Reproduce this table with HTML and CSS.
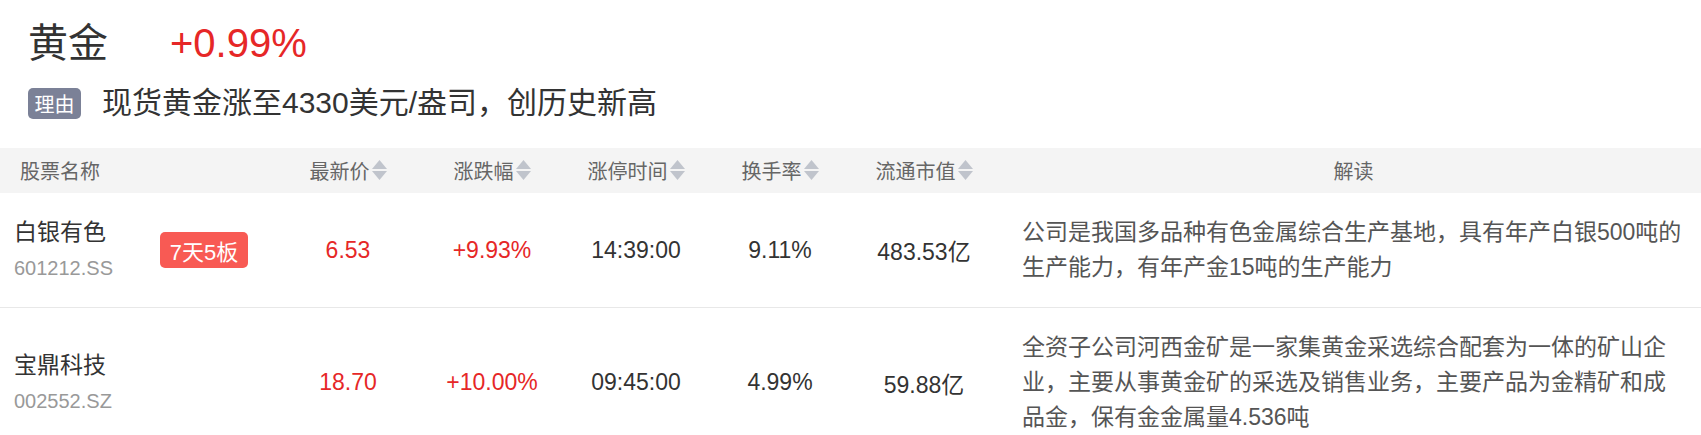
FILE: index.html
```html
<!DOCTYPE html>
<html lang="zh-CN">
<head>
<meta charset="utf-8">
<title>黄金</title>
<link rel="stylesheet" href="styles.css">
</head>
<body>
<div class="topic">
  <div class="topic-head">
    <span class="topic-name">黄金</span>
    <span class="topic-change">+0.99%</span>
  </div>
  <div class="topic-reason">
    <span class="reason-tag">理由</span>
    <span class="reason-text">现货黄金涨至4330美元/盎司，创历史新高</span>
  </div>
</div>

<div class="table">
  <div class="row head">
    <div class="cell name-cell">股票名称</div>
    <div class="cell"></div>
    <div class="cell center"><span class="sortable">最新价<svg class="sort" width="15" height="21" viewBox="0 0 15 21"><polygon points="7.5,0 15,9 0,9"/><polygon points="0,11 15,11 7.5,20"/></svg></span></div>
    <div class="cell center"><span class="sortable">涨跌幅<svg class="sort" width="15" height="21" viewBox="0 0 15 21"><polygon points="7.5,0 15,9 0,9"/><polygon points="0,11 15,11 7.5,20"/></svg></span></div>
    <div class="cell center"><span class="sortable">涨停时间<svg class="sort" width="15" height="21" viewBox="0 0 15 21"><polygon points="7.5,0 15,9 0,9"/><polygon points="0,11 15,11 7.5,20"/></svg></span></div>
    <div class="cell center"><span class="sortable">换手率<svg class="sort" width="15" height="21" viewBox="0 0 15 21"><polygon points="7.5,0 15,9 0,9"/><polygon points="0,11 15,11 7.5,20"/></svg></span></div>
    <div class="cell center"><span class="sortable">流通市值<svg class="sort" width="15" height="21" viewBox="0 0 15 21"><polygon points="7.5,0 15,9 0,9"/><polygon points="0,11 15,11 7.5,20"/></svg></span></div>
    <div class="cell desc-cell center">解读</div>
  </div>

  <div class="row body">
    <div class="cell name-cell">
      <div class="stock-name">白银有色</div>
      <div class="stock-code">601212.SS</div>
    </div>
    <div class="cell center"><span class="board-tag">7天5板</span></div>
    <div class="cell center up">6.53</div>
    <div class="cell center up">+9.93%</div>
    <div class="cell center">14:39:00</div>
    <div class="cell center">9.11%</div>
    <div class="cell center">483.53亿</div>
    <div class="cell desc-cell desc">公司是我国多品种有色金属综合生产基地，具有年产白银500吨的生产能力，有年产金15吨的生产能力</div>
  </div>

  <div class="row body">
    <div class="cell name-cell">
      <div class="stock-name">宝鼎科技</div>
      <div class="stock-code">002552.SZ</div>
    </div>
    <div class="cell center"></div>
    <div class="cell center up">18.70</div>
    <div class="cell center up">+10.00%</div>
    <div class="cell center">09:45:00</div>
    <div class="cell center">4.99%</div>
    <div class="cell center">59.88亿</div>
    <div class="cell desc-cell desc">全资子公司河西金矿是一家集黄金采选综合配套为一体的矿山企业，主要从事黄金矿的采选及销售业务，主要产品为金精矿和成品金，保有金金属量4.536吨</div>
  </div>
</div>
</body>
</html>
```

FILE: styles.css
```css
* {
  box-sizing: border-box;
}

html, body {
  margin: 0;
  padding: 0;
  background: #ffffff;
}

body {
  font-family: "Liberation Sans", "Noto Sans CJK SC", sans-serif;
  color: #333333;
  width: 1701px;
  overflow: hidden;
}

.topic {
  padding: 18px 0 0 28px;
}

.topic-head {
  display: flex;
  align-items: center;
  height: 50px;
}

.topic-name {
  font-size: 40px;
  line-height: 50px;
  color: #333333;
}

.topic-change {
  font-size: 40px;
  line-height: 50px;
  color: #e62727;
  margin-left: 62px;
}

.topic-reason {
  display: flex;
  align-items: center;
  margin-top: 17px;
  height: 36px;
}

.reason-tag {
  display: inline-flex;
  align-items: center;
  justify-content: center;
  width: 53px;
  height: 31px;
  border-radius: 5px;
  background: #7b8197;
  color: #ffffff;
  font-size: 20px;
}

.reason-text {
  margin-left: 21px;
  font-size: 30px;
  line-height: 36px;
  color: #333333;
}

.table {
  margin-top: 27px;
}

.row {
  display: grid;
  grid-template-columns: 132px repeat(6, 144px) 1fr;
  align-items: center;
}

.row.head {
  height: 45px;
  background: #f4f4f4;
  color: #666666;
  font-size: 20px;
}

.row.body {
  padding: 22px 0;
  border-bottom: 1px solid #e8e8e8;
  font-size: 23px;
  color: #333333;
}

.cell {
  min-width: 0;
}

.center {
  text-align: center;
}

.name-cell {
  padding-left: 14px;
}

.head .name-cell {
  padding-left: 20px;
}

.sortable {
  display: inline-flex;
  align-items: center;
}

.sort {
  margin-left: 2px;
  fill: #c0c4cc;
}

.stock-name {
  font-size: 23px;
  line-height: 30px;
  color: #333333;
}

.stock-code {
  margin-top: 6px;
  font-size: 20px;
  line-height: 30px;
  color: #999999;
}

.board-tag {
  display: inline-flex;
  align-items: center;
  justify-content: center;
  width: 88px;
  height: 36px;
  border-radius: 5px;
  background: #f85a54;
  color: #ffffff;
  font-size: 22px;
}

.up {
  color: #e62727;
}

.desc-cell {
  padding: 0 16px 0 26px;
}

.desc {
  font-size: 23px;
  line-height: 35px;
  color: #555555;
}
```
